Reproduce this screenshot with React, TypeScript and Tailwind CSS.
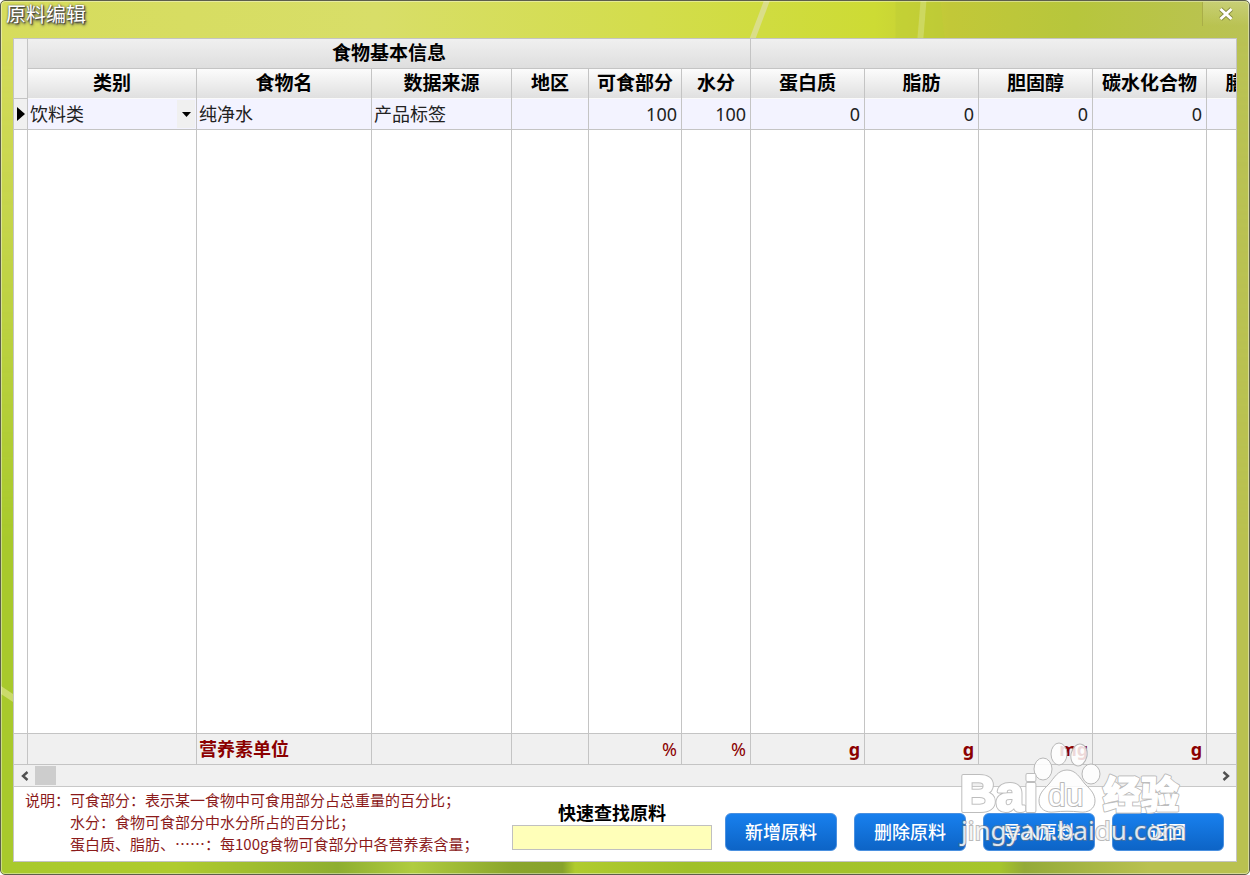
import React from "react";

type Column = { label: string; width: string; value: string; unit: string; align: string };

const columns: Column[] = [
  { label: "类别", width: "w-[169px]", value: "饮料类", unit: "", align: "text-left" },
  { label: "食物名", width: "w-[175px]", value: "纯净水", unit: "营养素单位", align: "text-left" },
  { label: "数据来源", width: "w-[140px]", value: "产品标签", unit: "", align: "text-left" },
  { label: "地区", width: "w-[77px]", value: "", unit: "", align: "text-left" },
  { label: "可食部分", width: "w-[93px]", value: "100", unit: "%", align: "text-right" },
  { label: "水分", width: "w-[69px]", value: "100", unit: "%", align: "text-right" },
  { label: "蛋白质", width: "w-[114px]", value: "0", unit: "g", align: "text-right" },
  { label: "脂肪", width: "w-[114px]", value: "0", unit: "g", align: "text-right" },
  { label: "胆固醇", width: "w-[114px]", value: "0", unit: "mg", align: "text-right" },
  { label: "碳水化合物", width: "w-[114px]", value: "0", unit: "g", align: "text-right" },
  { label: "膳食纤维", width: "w-[114px]", value: "", unit: "", align: "text-right" },
];

const actions = ["新增原料", "删除原料", "导入原料", "返回"];

function TitleBar() {
  return (
    <header className="relative flex h-[37px] shrink-0 items-start justify-between">
      <svg className="absolute inset-0 h-full w-full" viewBox="0 0 1250 36" preserveAspectRatio="none" aria-hidden="true">
        <path d="M764 0h6l-14 36h-6z" fill="#dade88" />
        <path d="M896 0h25l-4 36h-21z" fill="#bccb35" opacity=".45" />
        <path d="M921 0h6l-3 36h-6z" fill="#cdd860" />
        <path d="M927 0h14l4 36h-21z" fill="#bccb35" opacity=".6" />
      </svg>
      <h1 className="relative pl-[5px] pt-px text-[20px] leading-[26px] text-white [text-shadow:1px_1px_1px_#444,1px_2px_3px_#444,0_0_2px_#555]">
        原料编辑
      </h1>
      <button
        aria-label="关闭"
        className="relative mt-px flex h-6 w-[47px] items-center justify-center border-l border-[#a9ae48] bg-gradient-to-b from-white/20 to-transparent"
      >
        <svg width="16" height="14" viewBox="0 0 16 14" aria-hidden="true">
          <path d="M2.500 2 13.500 12M13.500 2 2.500 12" stroke="#858a3c" strokeWidth="4.500" />
          <path d="M2.500 2 13.500 12M13.500 2 2.500 12" stroke="#fff" strokeWidth="3" />
        </svg>
      </button>
    </header>
  );
}

function FoodTable() {
  const line = "border-r border-[#c4c4c4]";
  return (
    <div className="grid flex-1 overflow-hidden">
      <table className="h-full w-[1307px] min-w-full table-fixed border-separate border-spacing-0">
        <colgroup>
          <col className="w-[14px]" />
          {columns.map((c) => (
            <col key={c.label} className={c.width} />
          ))}
        </colgroup>
        <thead className="text-[19px] text-black">
          <tr className="h-[30px]">
            <td rowSpan={2} className={`${line} border-b bg-[#f0f0f0]`} />
            <th colSpan={6} className={`${line} border-b bg-gradient-to-b from-[#f0f0f0] to-[#dedede] p-0 pb-[2px] leading-[26px]`}>
              食物基本信息
            </th>
            <th colSpan={5} className="border-b border-[#c4c4c4] bg-gradient-to-b from-[#f0f0f0] to-[#dedede] p-0" />
          </tr>
          <tr className="h-[30px]">
            {columns.map((c) => (
              <th
                key={c.label}
                className={`${line} whitespace-nowrap bg-gradient-to-b from-[#fcfcfc] to-[#dfdfdf] p-0 pb-[2px] leading-[26px] shadow-[inset_0_-1px_0_#fafafa]`}
              >
                {c.label}
              </th>
            ))}
          </tr>
        </thead>
        <tbody className="text-[18px] text-[#222]">
          <tr className="h-[31px] bg-[#f3f3ff]">
            <td className={`${line} border-b bg-[#f0f0f0] p-0`}>
              <svg className="ml-[3px]" width="9" height="16" viewBox="0 0 9 16" aria-hidden="true">
                <path d="M0 1v14l8-7z" fill="#000" />
              </svg>
            </td>
            {columns.map((c, i) => (
              <td key={c.label} className={`${line} border-b py-0 pl-[2px] leading-7 ${i === 0 ? "pr-px" : "pr-1"} ${c.align}`}>
                {i === 0 ? (
                  <div className="flex h-7 items-center justify-between">
                    <select aria-label="类别" className="min-w-0 flex-1 appearance-none bg-transparent p-0 leading-7 outline-none">
                      <option>{c.value}</option>
                    </select>
                    <span className="flex h-7 w-[18px] shrink-0 items-center justify-center bg-[#f0f0f0]">
                      <svg width="9" height="5" viewBox="0 0 9 5" aria-hidden="true">
                        <path d="M0 0h9L4.500 5z" fill="#000" />
                      </svg>
                    </span>
                  </div>
                ) : (
                  c.value
                )}
              </td>
            ))}
          </tr>
          <tr>
            <td className={`${line} bg-white`} />
            {columns.map((c) => (
              <td key={c.label} className={`${line} bg-white`} />
            ))}
          </tr>
        </tbody>
        <tfoot className="text-[18px] font-bold text-[#8b0000]">
          <tr className="h-8 bg-[#f0f0f0]">
            <td className={`${line} border-y`} />
            {columns.map((c) => (
              <td key={c.label} className={`${line} border-y py-0 pl-[2px] pr-1 leading-7 ${c.align} ${c.unit === "%" ? "font-normal" : ""}`}>
                {c.unit}
              </td>
            ))}
          </tr>
        </tfoot>
      </table>
    </div>
  );
}

function ScrollBar() {
  return (
    <div className="flex h-[22px] shrink-0 items-center border-b border-[#c8c8c8] bg-[#f0f0f0]">
      <button aria-label="向左滚动" className="flex h-full w-[21px] items-center justify-center">
        <svg width="8" height="10" viewBox="0 0 8 10" aria-hidden="true">
          <path d="M6.500 1 2 5l4.500 4" fill="none" stroke="#505050" strokeWidth="2.400" />
        </svg>
      </button>
      <div className="h-[19px] w-[21px] bg-[#cdcdcd]" />
      <div className="flex-1" />
      <button aria-label="向右滚动" className="flex h-full w-[21px] items-center justify-center">
        <svg width="8" height="10" viewBox="0 0 8 10" aria-hidden="true">
          <path d="M1.500 1 6 5l-4.500 4" fill="none" stroke="#505050" strokeWidth="2.400" />
        </svg>
      </button>
    </div>
  );
}

function Footer() {
  return (
    <footer className="flex h-[74px] shrink-0 items-start bg-white pr-3">
      <div className="flex w-[498px] shrink-0 whitespace-nowrap pl-[11px] pt-[2px] font-['Noto_Sans_CJK_SC',sans-serif] text-[15px] leading-[22px] text-[#8b1a1a]">
        <p>说明：</p>
        <div lang="zh-CN">
          <p>可食部分：表示某一食物中可食用部分占总重量的百分比；</p>
          <p>水分：食物可食部分中水分所占的百分比；</p>
          <p>蛋白质、脂肪、……：每100g食物可食部分中各营养素含量；</p>
        </div>
      </div>
      <div className="flex w-[200px] shrink-0 flex-col items-center pt-[14px]">
        <label htmlFor="search" className="text-[18px] font-bold leading-6 text-black">
          快速查找原料
        </label>
        <input id="search" className="h-[25px] w-full border border-[#c0c0c0] bg-[#ffffb9] px-1 text-base outline-none" />
      </div>
      <div className="ml-auto flex gap-[17px] pt-[26px]">
        {actions.map((a) => (
          <button
            key={a}
            className="h-[38px] w-28 rounded-md border border-[#4a90e0] bg-gradient-to-b from-[#1880ee] to-[#0d64c6] text-[18px] font-medium text-white"
          >
            {a}
          </button>
        ))}
      </div>
    </footer>
  );
}

function Watermark() {
  return (
    <div className="pointer-events-none absolute bottom-[21px] right-[62px] h-[115px] w-[232px]" aria-hidden="true">
      <svg width="232" height="115" viewBox="0 0 232 115">
        <g fill="#fff" fillOpacity=".85" stroke="#b8b8b8" strokeWidth="1">
          <ellipse cx="88" cy="31" rx="9" ry="11" />
          <ellipse cx="104" cy="16" rx="8" ry="11" />
          <ellipse cx="124" cy="17" rx="8" ry="11" transform="rotate(12 124 17)" />
          <ellipse cx="136" cy="36" rx="9" ry="10" />
          <path d="M112 32c-9 0-13 8-18 14-6 6-10 10-10 17 0 8 7 12 15 11 8-1 18-1 26 0 8 1 15-3 15-11 0-7-4-11-10-17-5-6-9-14-18-14z" />
        </g>
        <g strokeLinejoin="round" paintOrder="stroke">
          <text x="5" y="73" fontSize="50" fontWeight="700" fill="#fff" stroke="#bdbdbd" strokeWidth="4" fontFamily="Liberation Sans, sans-serif">Bai</text>
          <text x="93" y="68" fontSize="32" fill="#fff" stroke="#b8b8b8" strokeWidth="2" fontFamily="Liberation Sans, sans-serif">du</text>
          <text x="148" y="70" fontSize="38" fontWeight="900" fill="#fff" stroke="#bdbdbd" strokeWidth="3" fontFamily="Noto Sans CJK SC, sans-serif">经验</text>
        </g>
        <g fill="#fff" stroke="#fff" strokeWidth="2" strokeLinejoin="round">
          <text x="5" y="73" fontSize="50" fontWeight="700" fontFamily="Liberation Sans, sans-serif">Bai</text>
          <text x="148" y="70" fontSize="38" fontWeight="900" strokeWidth="1" fontFamily="Noto Sans CJK SC, sans-serif">经验</text>
        </g>
        <text x="6" y="102" fontSize="26" fill="#fff" fillOpacity=".85" stroke="#777" strokeOpacity=".5" strokeWidth="2" paintOrder="stroke" fontFamily="Noto Sans, sans-serif">
          jingyan.baidu.com
        </text>
      </svg>
    </div>
  );
}

export default function App() {
  return (
    <main className="relative flex min-h-screen flex-col overflow-hidden rounded-[5px] border border-[#5c5e4c] bg-[linear-gradient(90deg,#d6dc5c_0%,#d8de68_30%,#d3dd4c_52%,#cddb34_70%,#c2c838_76%,#b7c63c_86%,#bac255_100%)] font-['Noto_Sans','Noto_Sans_CJK_SC',sans-serif]">
      <div className="absolute inset-x-0 bottom-0 top-9 bg-[linear-gradient(90deg,#a8c92c_0%,#afcb2e_14%,#8eae30_27%,#b0cc40_33%,#8aa52c_41%,#87a22c_45%,#b0cb2e_46%,#a0c02a_55%,#a6c52c_80%,#94aa38_82%,#b9c150_92%)] [mask-image:linear-gradient(to_bottom,transparent,black_60%)]" />
      <svg className="absolute bottom-[150px] left-0" width="12" height="60" viewBox="0 0 12 60" aria-hidden="true">
        <path d="M0 22l12 8v8L0 30z" fill="#d3e07c" opacity=".8" />
      </svg>
      <TitleBar />
      <section className="relative mx-3 mb-3 flex flex-1 flex-col border border-[#c4c4c4]">
        <FoodTable />
        <ScrollBar />
        <Footer />
      </section>
      <div className="pointer-events-none absolute inset-0 rounded-[4px] border border-white/40" />
      <Watermark />
    </main>
  );
}
